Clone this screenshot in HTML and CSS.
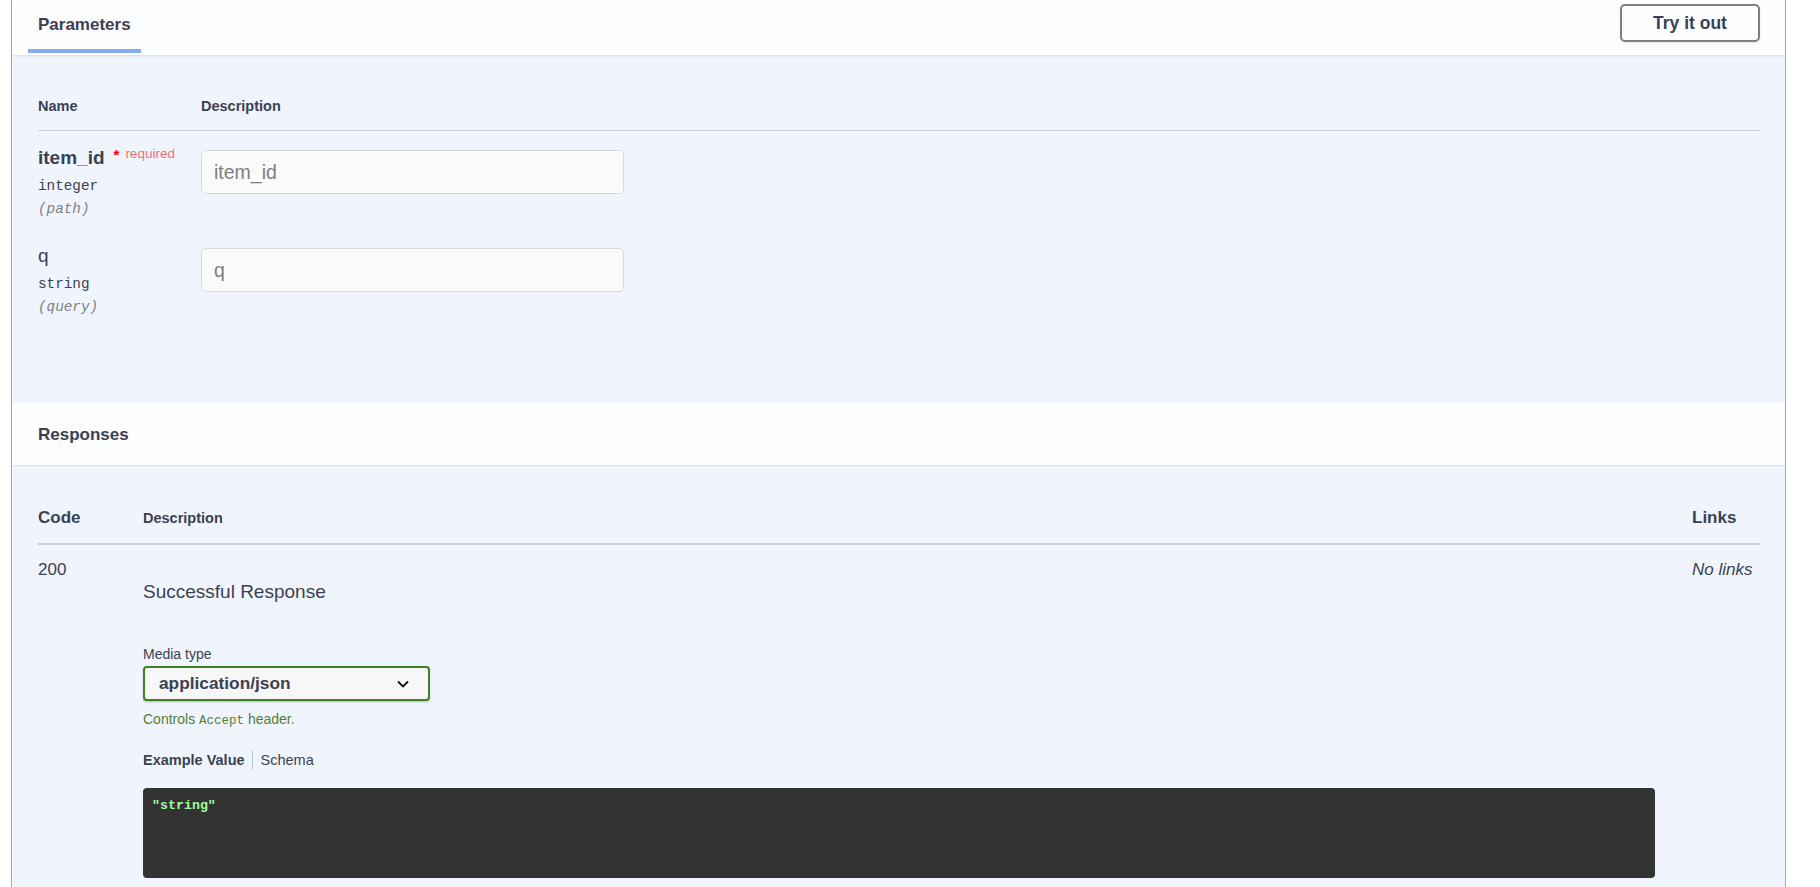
FILE: index.html
```html
<!DOCTYPE html>
<html lang="en">
<head>
<meta charset="UTF-8">
<meta name="viewport" content="width=device-width, initial-scale=1.0">
<title>GET /items/{item_id}</title>
<link rel="stylesheet" href="styles.css">
</head>
<body>

<div class="opblock">
    <div class="section-header params-header">
        <div class="tab-item"><h4>Parameters</h4></div>
        <button type="button" class="btn-try">Try it out</button>
    </div>

    <div class="params-body">
        <table class="params-table">
            <thead>
                <tr>
                    <th class="col-name">Name</th>
                    <th>Description</th>
                </tr>
            </thead>
            <tbody>
                <tr>
                    <td class="col-name">
                        <div class="param-name required">item_id<span class="star">*</span><span class="req">required</span></div>
                        <div class="param-type">integer</div>
                        <div class="param-in">(path)</div>
                    </td>
                    <td><input type="text" class="param-input" placeholder="item_id"></td>
                </tr>
                <tr>
                    <td class="col-name">
                        <div class="param-name">q</div>
                        <div class="param-type">string</div>
                        <div class="param-in">(query)</div>
                    </td>
                    <td><input type="text" class="param-input" placeholder="q"></td>
                </tr>
            </tbody>
        </table>
    </div>

    <div class="section-header responses-header">
        <h4>Responses</h4>
    </div>

    <div class="responses-body">
        <div class="resp-grid resp-head">
            <div class="resp-code">Code</div>
            <div class="resp-desc-title">Description</div>
            <div class="resp-links">Links</div>
        </div>
        <div class="resp-grid resp-row">
            <div class="resp-code status">200</div>
            <div class="resp-desc">
                <p class="resp-message">Successful Response</p>
                <div class="media-title">Media type</div>
                <div class="media-select">
                    <span>application/json</span>
                    <svg width="12" height="8" viewBox="0 0 12 8"><path d="M1 1.5l5 5 5-5" fill="none" stroke="#111" stroke-width="1.8"/></svg>
                </div>
                <div class="accept-msg">Controls <code>Accept</code> header.</div>
                <ul class="example-tabs">
                    <li class="active">Example Value</li>
                    <li>Schema</li>
                </ul>
                <pre class="example-code">"string"</pre>
            </div>
            <div class="resp-links no-links">No links</div>
        </div>
    </div>
</div>

</body>
</html>
```

FILE: styles.css
```css
body {
    margin: 0;
    background-color: #fff;
    font-family: "Liberation Sans", Arial, sans-serif;
    color: #3b4151;
}

.opblock {
    width: 1775px;
    min-height: 887px;
    margin-left: 11px;
    box-sizing: border-box;
    border-left: 1px solid #84aff2;
    border-right: 1px solid #84aff2;
    background-color: #f0f5fd;
}

.section-header {
    background-color: rgba(255, 255, 255, 0.8);
    box-shadow: 0 1px 2px rgba(0, 0, 0, 0.1);
}

.section-header h4 {
    margin: 0;
    font-size: 17px;
    line-height: 20px;
    font-weight: bold;
}

/* parameters */

.params-header {
    display: flex;
    justify-content: space-between;
    align-items: flex-start;
    height: 55px;
    padding: 0 25px 0 16px;
}

.tab-item {
    padding: 15px 10px 14px;
    border-bottom: 4px solid #86acef;
}

.btn-try {
    margin-top: 4px;
    width: 140px;
    height: 38px;
    border: 2px solid #808080;
    border-radius: 5px;
    background-color: transparent;
    box-shadow: 0 1px 2px rgba(0, 0, 0, 0.1);
    font-family: "Liberation Sans", Arial, sans-serif;
    font-size: 17.5px;
    font-weight: bold;
    color: #3b4151;
    cursor: pointer;
}

.params-body {
    padding: 27px 25px 76px 26px;
}

.params-table {
    width: 100%;
    border-collapse: collapse;
}

.params-table th {
    text-align: left;
    font-size: 14.5px;
    line-height: 18px;
    font-weight: bold;
    padding: 15px 0;
    border-bottom: 1px solid #ccd2dc;
}

.params-table td {
    padding: 16px 0 11px;
    vertical-align: top;
}

.col-name {
    width: 163px;
}

.param-name {
    font-size: 19px;
    line-height: 22px;
}

.param-name.required {
    font-weight: bold;
}

.star {
    color: red;
    font-size: 15px;
    line-height: 0;
    margin-left: 9px;
    vertical-align: 4px;
}

.req {
    color: rgba(255, 0, 0, 0.6);
    font-size: 13.5px;
    font-weight: normal;
    line-height: 0;
    margin-left: 6px;
    vertical-align: 6px;
}

.param-type {
    margin-top: 8px;
    font-family: "Liberation Mono", monospace;
    font-size: 14.3px;
    line-height: 18px;
}

.param-in {
    margin-top: 5px;
    font-family: "Liberation Mono", monospace;
    font-size: 14.3px;
    line-height: 18px;
    font-style: italic;
    color: #808080;
}

.param-input {
    display: block;
    margin: 3px 0 0;
    width: 423px;
    height: 44px;
    box-sizing: border-box;
    padding: 0 12px;
    border: 1px solid #d9d9d9;
    border-radius: 5px;
    background-color: #fafafa;
    font-family: "Liberation Sans", Arial, sans-serif;
    font-size: 19.5px;
    color: #3b4151;
}

.param-input::placeholder {
    color: #7f7f7f;
}

/* responses */

.responses-header {
    padding: 22px 26px 20px;
}

.responses-body {
    padding: 28px 24px 0 26px;
}

.resp-grid {
    display: grid;
    grid-template-columns: 105px 1fr 69px;
}

.resp-head {
    padding: 15px 0;
    border-bottom: 2px solid #ccd0d8;
    line-height: 20px;
    font-weight: bold;
}

.resp-head .resp-code,
.resp-head .resp-links {
    font-size: 17px;
}

.resp-desc-title {
    font-size: 14.5px;
}

.resp-row {
    padding-top: 15px;
}

.status {
    font-size: 17px;
    line-height: 20px;
}

.resp-desc {
    padding-right: 37px;
}

.resp-message {
    margin: 20px 0 0;
    font-size: 19px;
    line-height: 24px;
}

.media-title {
    margin-top: 42px;
    font-size: 14px;
    line-height: 16px;
}

.media-select {
    display: flex;
    justify-content: space-between;
    align-items: center;
    margin-top: 4px;
    width: 287px;
    height: 35px;
    box-sizing: border-box;
    padding: 0 19px 0 14px;
    border: 2px solid #3f8224;
    border-radius: 4px;
    background-color: #f7f7f7;
    box-shadow: 0 1px 2px rgba(0, 0, 0, 0.25);
    font-size: 17.3px;
    font-weight: bold;
}

.accept-msg {
    margin-top: 10px;
    font-size: 14px;
    line-height: 16px;
    color: #557d33;
}

.accept-msg code {
    font-family: "Liberation Mono", monospace;
    font-size: 12.5px;
}

.example-tabs {
    display: flex;
    list-style: none;
    margin: 21px 0 0;
    padding: 0;
    font-size: 14.5px;
    line-height: 20px;
}

.example-tabs li {
    padding-right: 7px;
}

.example-tabs li + li {
    padding-left: 8px;
    border-left: 1px solid #c5c8cf;
}

.example-tabs li.active {
    font-weight: bold;
}

.example-code {
    margin: 18px 0 0;
    min-height: 90px;
    box-sizing: border-box;
    padding: 9px;
    border-radius: 4px;
    background-color: #333;
    font-family: "Liberation Mono", monospace;
    font-size: 13.3px;
    line-height: 18px;
    font-weight: bold;
    color: #a2fca2;
}

.resp-links {
    white-space: nowrap;
}

.no-links {
    font-size: 17px;
    line-height: 20px;
    font-style: italic;
}
```
